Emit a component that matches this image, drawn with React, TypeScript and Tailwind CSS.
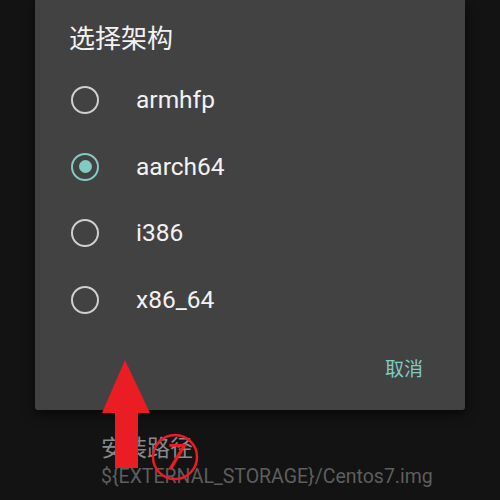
import React from "react";

const options = ["armhfp", "aarch64", "i386", "x86_64"];

function Radio({ checked }: { checked: boolean }) {
  if (checked) {
    return (
      <div className="flex h-[28px] w-[28px] items-center justify-center rounded-full border-[2.5px] border-[#80cbc4]">
        <div className="h-[13px] w-[13px] rounded-full bg-[#80cbc4]" />
      </div>
    );
  }
  return <div className="h-[28px] w-[28px] rounded-full border-[2.5px] border-[#cfcfcf]" />;
}

export default function App() {
  return (
    <div
      className="relative h-[500px] w-[500px] overflow-hidden bg-[#131313]"
      style={{ fontFamily: "Roboto, 'Noto Sans CJK SC', sans-serif" }}
    >
      <div className="mx-[35px] flex h-[410px] w-[430px] flex-col rounded-b-[3px] bg-[#424242] shadow-[0_4px_12px_rgba(0,0,0,0.6)]">
        <div className="flex h-[67px] items-center pl-[34px] pt-[10px] text-[26px] leading-[32px] text-[#f2f2f2]">
          选择架构
        </div>
        {options.map((o) => (
          <div key={o} className="flex h-[66.5px] items-center">
            <div className="ml-[36px]">
              <Radio checked={o === "aarch64"} />
            </div>
            <span className="ml-[37px] text-[24.5px] leading-[28px] text-[#f2f2f2]">{o}</span>
          </div>
        ))}
        <div className="flex flex-1 items-center justify-end pr-[42px] pb-[4px]">
          <span className="text-[19px] leading-[24px] text-[#80cbc4]">取消</span>
        </div>
      </div>
      <div className="ml-[101px] mt-[25px] flex flex-col">
        <span className="text-[23px] leading-[28px] text-[#8a8a8a]">安装路径</span>
        <span className="mt-[2px] text-[19.5px] leading-[24px] text-[#5e5e5e]">
          {"${EXTERNAL_STORAGE}/Centos7.img"}
        </span>
      </div>
      <svg className="absolute left-0 top-0" width="500" height="500" viewBox="0 0 500 500">
        <polygon points="125,360 150,413 138,413 138,468 115,468 115,413 102,413" fill="#ea1c24" />
        <circle cx="175" cy="457" r="22" fill="none" stroke="#ee1a22" strokeWidth="2.5" />
      </svg>
      <span
        className="absolute left-[165px] top-[440px] z-10 text-[34px] leading-[34px] font-normal italic text-[#ee1a22]"
        style={{ fontFamily: "'DejaVu Sans', sans-serif" }}
      >
        7
      </span>
    </div>
  );
}
